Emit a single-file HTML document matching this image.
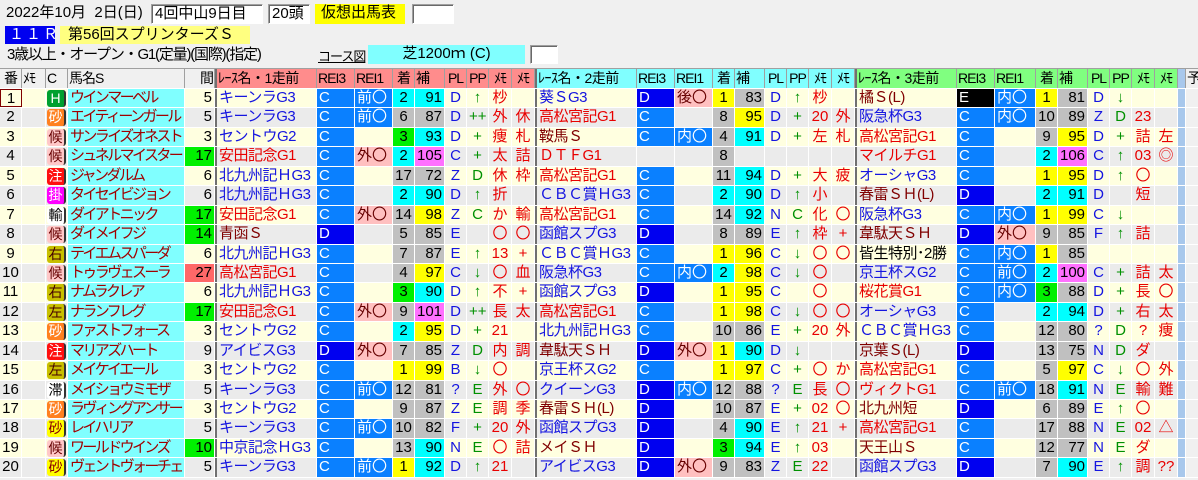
<!DOCTYPE html>
<html><head><meta charset="utf-8"><style>
*{box-sizing:border-box;margin:0;padding:0}
body{width:1198px;height:480px;overflow:hidden;background:#f0f0f0;font-family:"Liberation Sans","Noto Sans CJK JP",sans-serif;font-size:15px;color:#000;position:relative}
.a{position:absolute;white-space:nowrap;line-height:18px}
.bx{background:#fff;border:1px solid #a0a0a0;border-right-color:#fff;border-bottom-color:#fff;box-shadow:inset 1px 1px 0 #696969}
#t{position:absolute;left:0;top:68px;width:1198px;border-top:1px solid #a0a0a0}
.r{display:flex;height:19.45px;border-bottom:1px solid #fff}
.h{height:20px;background:#f0f0f0}
.o{background:#ffffe0}.e{background:#ebebeb}
.r>b{display:block;font-weight:normal;height:100%;border-right:1px solid #fff;overflow:hidden;white-space:nowrap;line-height:18px;padding:0 2px;flex:none}
.h>b{border-right:1px solid #a0a0a0;padding:0 1px;font-size:14px;line-height:19px;letter-spacing:-1px}
.r>b:nth-child(1){width:22px;text-align:center}
.r>b:nth-child(2){width:24px}
.r>b:nth-child(3){width:22px;padding:0 1px}
.r>b:nth-child(4){width:117px}
.r>b:nth-child(5){width:30px;text-align:right}
.r>b:nth-child(6),.r>b:nth-child(15),.r>b:nth-child(24){width:102px;border-left:2px solid #707070;letter-spacing:-0.5px}
.r>b:nth-child(7),.r>b:nth-child(8),.r>b:nth-child(16),.r>b:nth-child(17),.r>b:nth-child(25){width:38px}
.r>b:nth-child(26){width:41px}
.r>b:nth-child(9),.r>b:nth-child(18),.r>b:nth-child(27){width:22px;text-align:center}
.r>b:nth-child(10),.r>b:nth-child(19),.r>b:nth-child(28){width:30px;text-align:right}
.r>b:nth-child(11),.r>b:nth-child(12),.r>b:nth-child(20),.r>b:nth-child(21),.r>b:nth-child(29),.r>b:nth-child(30){width:22px;text-align:center}
.r>b:nth-child(13),.r>b:nth-child(14),.r>b:nth-child(22),.r>b:nth-child(23),.r>b:nth-child(31),.r>b:nth-child(32){width:23px;text-align:center;padding:0}
.r>b:nth-child(33){width:8px;background:#a8c8ec;padding:0}
.r>b:nth-child(34){width:20px;background:#f0f0f0}
.h>b:nth-child(n+6):nth-child(-n+14){background:#ff8c8c}
.h>b:nth-child(n+15):nth-child(-n+23){background:#80ffff}
.h>b:nth-child(n+24):nth-child(-n+32){background:#80ff80}
.r>b.nm{background:#80ffff;color:#a00000;letter-spacing:-2.6px}
.c{background:#0a80ff!important;color:#fff}
.d{background:#0000f0!important;color:#fff}
.k{background:#000!important;color:#fff}
.p{background:#ffc0c0!important;color:#600}
.y{background:#ffff00!important}
.cy{background:#00ffff!important}
.g{background:#00f000!important}
.gr{background:#c0c0c0!important}
.m{background:#ff70ff!important}
.rd{background:#ff6868!important}
.tb{color:#1414e0}.tr{color:#e80000}.tn{color:#800000}.tg{color:#009000}
.sel{border:1px solid #800000!important;background:#ffffe0}
s{text-decoration:none;display:inline-block;width:19px;height:17px;line-height:17px;text-align:center;border-radius:3px;margin-top:1px;font-size:14px;border-right:2px solid #333}
.sH{background:#00a030;color:#fff}.sS{background:#ff8020;color:#fff}.sK{background:#ffc8c8;color:#600}.sC{background:#ff1010;color:#fff}.sM{background:#ff00ff;color:#fff}.sW{background:#fff;color:#000}.sR{background:#c8c000;color:#400}.sY{background:#ffff00;color:#800}
</style></head><body>
<div class="a" style="left:6px;top:4px">2022年10月&nbsp; 2日(日)</div>
<div class="a bx" style="left:151px;top:4px;width:112px;height:20px;padding-left:3px;line-height:17px">4回中山9日目</div>
<div class="a bx" style="left:268px;top:4px;width:42px;height:20px;padding-left:3px;line-height:17px">20頭</div>
<div class="a" style="left:315px;top:4px;width:90px;height:20px;background:#ffff00;padding-left:6px">仮想出馬表</div>
<div class="a bx" style="left:412px;top:4px;width:42px;height:20px"></div>
<div class="a" style="left:5px;top:26px;width:50px;height:18px;background:#0000f0;color:#fff;padding-left:4px;letter-spacing:2px">１１Ｒ</div>
<div class="a" style="left:60px;top:26px;width:190px;height:18px;background:#ffff80;padding-left:8px">第56回スプリンターズＳ</div>
<div class="a" style="left:7px;top:46px;letter-spacing:-1.2px">3歳以上・オープン・G1(定量)(国際)(指定)</div>
<div class="a" style="left:318px;top:48px;font-size:13px;letter-spacing:-1px;text-decoration:underline">コース図</div>
<div class="a" style="left:368px;top:45px;width:157px;height:19px;background:#80ffff;text-align:center">芝1200ｍ (C)</div>
<div class="a bx" style="left:530px;top:45px;width:28px;height:19px"></div>
<div id="t">
<div class="r h"><b>番</b><b>ﾒﾓ</b><b>C</b><b>馬名S</b><b style="text-align:right">間</b><b>ﾚｰｽ名・1走前</b><b>REI3</b><b>REI1</b><b>着</b><b style="text-align:left">補</b><b>PL</b><b>PP</b><b>ﾒﾓ</b><b>ﾒﾓ</b><b>ﾚｰｽ名・2走前</b><b>REI3</b><b>REI1</b><b>着</b><b style="text-align:left">補</b><b>PL</b><b>PP</b><b>ﾒﾓ</b><b>ﾒﾓ</b><b>ﾚｰｽ名・3走前</b><b>REI3</b><b>REI1</b><b>着</b><b style="text-align:left">補</b><b>PL</b><b>PP</b><b>ﾒﾓ</b><b>ﾒﾓ</b><b></b><b>予</b></div>

<div class="r o"><b class=sel>1</b><b></b><b><s class=sH>H</s></b><b class=nm>ウインマーベル</b><b>5</b><b class=tb>キーンラG3</b><b class=c>C</b><b class=c>前〇</b><b class=cy>2</b><b class=cy>91</b><b class=tb>D</b><b class=tg>↑</b><b class=tr>杪</b><b></b><b class=tb>葵ＳG3</b><b class=d>D</b><b class=p>後〇</b><b class=y>1</b><b class=gr>83</b><b class=tb>D</b><b class=tg>↑</b><b class=tr>杪</b><b></b><b class=tn>橘Ｓ(L)</b><b class=k>E</b><b class=c>内〇</b><b class=y>1</b><b class=gr>81</b><b class=tb>D</b><b class=tg>↓</b><b></b><b></b><b></b><b></b></div>
<div class="r e"><b>2</b><b></b><b><s class=sS>砂</s></b><b class=nm>エイティーンガール</b><b>5</b><b class=tb>キーンラG3</b><b class=c>C</b><b class=c>前〇</b><b class=gr>6</b><b class=gr>87</b><b class=tb>D</b><b class=tg>++</b><b class=tr>外</b><b class=tr>休</b><b class=tr>高松宮記G1</b><b class=c>C</b><b></b><b class=gr>8</b><b class=y>95</b><b class=tb>D</b><b class=tg>+</b><b class=tr>20</b><b class=tr>外</b><b class=tb>阪急杯G3</b><b class=c>C</b><b class=c>内〇</b><b class=gr>10</b><b class=gr>89</b><b class=tb>Z</b><b class=tg>D</b><b class=tr>23</b><b></b><b></b><b></b></div>
<div class="r o"><b>3</b><b></b><b><s class=sK>候</s></b><b class=nm>サンライズオネスト</b><b>3</b><b class=tb>セントウG2</b><b class=c>C</b><b></b><b class=g>3</b><b class=cy>93</b><b class=tb>D</b><b class=tg>+</b><b class=tr>痩</b><b class=tr>札</b><b class=tn>鞍馬Ｓ</b><b class=c>C</b><b class=c>内〇</b><b class=gr>4</b><b class=cy>91</b><b class=tb>D</b><b class=tg>+</b><b class=tr>左</b><b class=tr>札</b><b class=tr>高松宮記G1</b><b class=c>C</b><b></b><b class=gr>9</b><b class=y>95</b><b class=tb>D</b><b class=tg>+</b><b class=tr>詰</b><b class=tr>左</b><b></b><b></b></div>
<div class="r e"><b>4</b><b></b><b><s class=sK>候</s></b><b class=nm>シュネルマイスター</b><b class=g>17</b><b class=tr>安田記念G1</b><b class=c>C</b><b class=p>外〇</b><b class=cy>2</b><b class=m>105</b><b class=tb>C</b><b class=tg>+</b><b class=tr>太</b><b class=tr>詰</b><b class=tr>ＤＴＦG1</b><b></b><b></b><b class=gr>8</b><b></b><b></b><b></b><b></b><b></b><b class=tr>マイルチG1</b><b class=c>C</b><b></b><b class=cy>2</b><b class=m>106</b><b class=tb>C</b><b class=tg>↑</b><b class=tr>03</b><b class=tr>◎</b><b></b><b></b></div>
<div class="r o"><b>5</b><b></b><b><s class=sC>注</s></b><b class=nm>ジャンダルム</b><b>6</b><b class=tb>北九州記ＨG3</b><b class=c>C</b><b></b><b class=gr>17</b><b class=gr>72</b><b class=tb>Z</b><b class=tg>D</b><b class=tr>休</b><b class=tr>枠</b><b class=tr>高松宮記G1</b><b class=c>C</b><b></b><b class=gr>11</b><b class=cy>94</b><b class=tb>D</b><b class=tg>+</b><b class=tr>大</b><b class=tr>疲</b><b class=tb>オーシャG3</b><b class=c>C</b><b></b><b class=y>1</b><b class=y>95</b><b class=tb>D</b><b class=tg>↑</b><b class=tr>〇</b><b></b><b></b><b></b></div>
<div class="r e"><b>6</b><b></b><b><s class=sM>掛</s></b><b class=nm>タイセイビジョン</b><b>6</b><b class=tb>北九州記ＨG3</b><b class=c>C</b><b></b><b class=cy>2</b><b class=cy>90</b><b class=tb>D</b><b class=tg>↑</b><b class=tr>折</b><b></b><b class=tb>ＣＢＣ賞ＨG3</b><b class=c>C</b><b></b><b class=cy>2</b><b class=cy>90</b><b class=tb>D</b><b class=tg>↑</b><b class=tr>小</b><b></b><b class=tn>春雷ＳＨ(L)</b><b class=d>D</b><b></b><b class=cy>2</b><b class=cy>91</b><b class=tb>D</b><b></b><b class=tr>短</b><b></b><b></b><b></b></div>
<div class="r o"><b>7</b><b></b><b><s class=sW>輸</s></b><b class=nm>ダイアトニック</b><b class=g>17</b><b class=tr>安田記念G1</b><b class=c>C</b><b class=p>外〇</b><b class=gr>14</b><b class=y>98</b><b class=tb>Z</b><b class=tg>C</b><b class=tr>か</b><b class=tr>輸</b><b class=tr>高松宮記G1</b><b class=c>C</b><b></b><b class=gr>14</b><b class=cy>92</b><b class=tb>N</b><b class=tg>C</b><b class=tr>化</b><b class=tr>〇</b><b class=tb>阪急杯G3</b><b class=c>C</b><b class=c>内〇</b><b class=y>1</b><b class=y>99</b><b class=tb>C</b><b class=tg>↓</b><b></b><b></b><b></b><b></b></div>
<div class="r e"><b>8</b><b></b><b><s class=sK>候</s></b><b class=nm>ダイメイフジ</b><b class=g>14</b><b class=tn>青函Ｓ</b><b class=d>D</b><b></b><b class=gr>5</b><b class=gr>85</b><b class=tb>E</b><b></b><b class=tr>〇</b><b class=tr>〇</b><b class=tb>函館スプG3</b><b class=d>D</b><b></b><b class=gr>8</b><b class=gr>89</b><b class=tb>E</b><b class=tg>↑</b><b class=tr>枠</b><b class=tr>+</b><b class=tn>韋駄天ＳＨ</b><b class=d>D</b><b class=p>外〇</b><b class=gr>9</b><b class=gr>85</b><b class=tb>F</b><b class=tg>↑</b><b class=tr>詰</b><b></b><b></b><b></b></div>
<div class="r o"><b>9</b><b></b><b><s class=sR>右</s></b><b class=nm>テイエムスパーダ</b><b>6</b><b class=tb>北九州記ＨG3</b><b class=c>C</b><b></b><b class=gr>7</b><b class=gr>87</b><b class=tb>E</b><b class=tg>↑</b><b class=tr>13</b><b class=tr>+</b><b class=tb>ＣＢＣ賞ＨG3</b><b class=c>C</b><b></b><b class=y>1</b><b class=y>96</b><b class=tb>C</b><b class=tg>↓</b><b class=tr>〇</b><b class=tr>〇</b><b>皆生特別･2勝</b><b class=c>C</b><b class=c>内〇</b><b class=y>1</b><b class=gr>85</b><b></b><b></b><b></b><b></b><b></b><b></b></div>
<div class="r e"><b>10</b><b></b><b><s class=sK>候</s></b><b class=nm>トゥラヴェスーラ</b><b class=rd>27</b><b class=tr>高松宮記G1</b><b class=c>C</b><b></b><b class=gr>4</b><b class=y>97</b><b class=tb>C</b><b class=tg>↓</b><b class=tr>〇</b><b class=tr>血</b><b class=tb>阪急杯G3</b><b class=c>C</b><b class=c>内〇</b><b class=cy>2</b><b class=y>98</b><b class=tb>C</b><b class=tg>↓</b><b class=tr>〇</b><b></b><b class=tb>京王杯スG2</b><b class=c>C</b><b class=c>前〇</b><b class=cy>2</b><b class=m>100</b><b class=tb>C</b><b class=tg>+</b><b class=tr>詰</b><b class=tr>太</b><b></b><b></b></div>
<div class="r o"><b>11</b><b></b><b><s class=sR>右</s></b><b class=nm>ナムラクレア</b><b>6</b><b class=tb>北九州記ＨG3</b><b class=c>C</b><b></b><b class=g>3</b><b class=cy>90</b><b class=tb>D</b><b class=tg>↑</b><b class=tr>不</b><b class=tr>+</b><b class=tb>函館スプG3</b><b class=d>D</b><b></b><b class=y>1</b><b class=y>95</b><b class=tb>C</b><b></b><b class=tr>〇</b><b></b><b class=tr>桜花賞G1</b><b class=c>C</b><b class=c>内〇</b><b class=g>3</b><b class=gr>88</b><b class=tb>D</b><b class=tg>+</b><b class=tr>長</b><b class=tr>〇</b><b></b><b></b></div>
<div class="r e"><b>12</b><b></b><b><s class=sR>左</s></b><b class=nm>ナランフレグ</b><b class=g>17</b><b class=tr>安田記念G1</b><b class=c>C</b><b class=p>外〇</b><b class=gr>9</b><b class=m>101</b><b class=tb>D</b><b class=tg>++</b><b class=tr>長</b><b class=tr>太</b><b class=tr>高松宮記G1</b><b class=c>C</b><b></b><b class=y>1</b><b class=y>98</b><b class=tb>C</b><b class=tg>↓</b><b class=tr>〇</b><b class=tr>〇</b><b class=tb>オーシャG3</b><b class=c>C</b><b></b><b class=cy>2</b><b class=cy>94</b><b class=tb>D</b><b class=tg>+</b><b class=tr>右</b><b class=tr>太</b><b></b><b></b></div>
<div class="r o"><b>13</b><b></b><b><s class=sS>砂</s></b><b class=nm>ファストフォース</b><b>3</b><b class=tb>セントウG2</b><b class=c>C</b><b></b><b class=cy>2</b><b class=y>95</b><b class=tb>D</b><b class=tg>+</b><b class=tr>21</b><b></b><b class=tb>北九州記ＨG3</b><b class=c>C</b><b></b><b class=gr>10</b><b class=gr>86</b><b class=tb>E</b><b class=tg>+</b><b class=tr>20</b><b class=tr>外</b><b class=tb>ＣＢＣ賞ＨG3</b><b class=c>C</b><b></b><b class=gr>12</b><b class=gr>80</b><b class=tb>?</b><b class=tg>D</b><b class=tr>?</b><b class=tr>痩</b><b></b><b></b></div>
<div class="r e"><b>14</b><b></b><b><s class=sC>注</s></b><b class=nm>マリアズハート</b><b>9</b><b class=tb>アイビスG3</b><b class=d>D</b><b class=p>外〇</b><b class=gr>7</b><b class=gr>85</b><b class=tb>Z</b><b class=tg>D</b><b class=tr>内</b><b class=tr>調</b><b class=tn>韋駄天ＳＨ</b><b class=d>D</b><b class=p>外〇</b><b class=y>1</b><b class=cy>90</b><b class=tb>D</b><b class=tg>↓</b><b></b><b></b><b class=tn>京葉Ｓ(L)</b><b class=d>D</b><b></b><b class=gr>13</b><b class=gr>75</b><b class=tb>N</b><b class=tg>D</b><b class=tr>ダ</b><b></b><b></b><b></b></div>
<div class="r o"><b>15</b><b></b><b><s class=sR>左</s></b><b class=nm>メイケイエール</b><b>3</b><b class=tb>セントウG2</b><b class=c>C</b><b></b><b class=y>1</b><b class=y>99</b><b class=tb>B</b><b class=tg>↓</b><b class=tr>〇</b><b></b><b class=tb>京王杯スG2</b><b class=c>C</b><b></b><b class=y>1</b><b class=y>97</b><b class=tb>C</b><b class=tg>+</b><b class=tr>〇</b><b class=tr>か</b><b class=tr>高松宮記G1</b><b class=c>C</b><b></b><b class=gr>5</b><b class=y>97</b><b class=tb>C</b><b class=tg>↓</b><b class=tr>〇</b><b class=tr>外</b><b></b><b></b></div>
<div class="r e"><b>16</b><b></b><b><s class=sW>滞</s></b><b class=nm>メイショウミモザ</b><b>5</b><b class=tb>キーンラG3</b><b class=c>C</b><b class=c>前〇</b><b class=gr>12</b><b class=gr>81</b><b class=tb>?</b><b class=tg>E</b><b class=tr>外</b><b class=tr>〇</b><b class=tb>クイーンG3</b><b class=d>D</b><b class=c>内〇</b><b class=gr>12</b><b class=gr>88</b><b class=tb>?</b><b class=tg>E</b><b class=tr>長</b><b class=tr>〇</b><b class=tr>ヴィクトG1</b><b class=c>C</b><b class=c>前〇</b><b class=gr>18</b><b class=cy>91</b><b class=tb>N</b><b class=tg>E</b><b class=tr>輸</b><b class=tr>難</b><b></b><b></b></div>
<div class="r o"><b>17</b><b></b><b><s class=sS>砂</s></b><b class=nm>ラヴィングアンサー</b><b>3</b><b class=tb>セントウG2</b><b class=c>C</b><b></b><b class=gr>9</b><b class=gr>87</b><b class=tb>Z</b><b class=tg>E</b><b class=tr>調</b><b class=tr>季</b><b class=tn>春雷ＳＨ(L)</b><b class=d>D</b><b></b><b class=gr>10</b><b class=gr>87</b><b class=tb>E</b><b class=tg>+</b><b class=tr>02</b><b class=tr>〇</b><b class=tn>北九州短</b><b class=d>D</b><b></b><b class=gr>6</b><b class=gr>89</b><b class=tb>E</b><b class=tg>↑</b><b class=tr>〇</b><b></b><b></b><b></b></div>
<div class="r e"><b>18</b><b></b><b><s class=sY>砂</s></b><b class=nm>レイハリア</b><b>5</b><b class=tb>キーンラG3</b><b class=c>C</b><b class=c>前〇</b><b class=gr>10</b><b class=gr>82</b><b class=tb>F</b><b class=tg>+</b><b class=tr>20</b><b class=tr>外</b><b class=tb>函館スプG3</b><b class=d>D</b><b></b><b class=gr>4</b><b class=cy>90</b><b class=tb>E</b><b class=tg>↑</b><b class=tr>21</b><b class=tr>+</b><b class=tr>高松宮記G1</b><b class=c>C</b><b></b><b class=gr>17</b><b class=gr>88</b><b class=tb>N</b><b class=tg>E</b><b class=tr>02</b><b class=tr>△</b><b></b><b></b></div>
<div class="r o"><b>19</b><b></b><b><s class=sK>候</s></b><b class=nm>ワールドウインズ</b><b class=g>10</b><b class=tb>中京記念ＨG3</b><b class=c>C</b><b></b><b class=gr>13</b><b class=cy>90</b><b class=tb>N</b><b class=tg>E</b><b class=tr>〇</b><b class=tr>詰</b><b class=tn>メイＳＨ</b><b class=d>D</b><b></b><b class=g>3</b><b class=cy>94</b><b class=tb>E</b><b class=tg>↑</b><b class=tr>03</b><b></b><b class=tn>天王山Ｓ</b><b class=c>C</b><b></b><b class=gr>12</b><b class=gr>77</b><b class=tb>N</b><b class=tg>E</b><b class=tr>ダ</b><b></b><b></b><b></b></div>
<div class="r e"><b>20</b><b></b><b><s class=sY>砂</s></b><b class=nm>ヴェントヴォーチェ</b><b>5</b><b class=tb>キーンラG3</b><b class=c>C</b><b class=c>前〇</b><b class=y>1</b><b class=cy>92</b><b class=tb>D</b><b class=tg>↑</b><b class=tr>21</b><b></b><b class=tb>アイビスG3</b><b class=d>D</b><b class=p>外〇</b><b class=gr>9</b><b class=gr>83</b><b class=tb>Z</b><b class=tg>E</b><b class=tr>22</b><b></b><b class=tb>函館スプG3</b><b class=d>D</b><b></b><b class=gr>7</b><b class=cy>90</b><b class=tb>E</b><b class=tg>↑</b><b class=tr>調</b><b class=tr>??</b><b></b><b></b></div>
</div>
</body></html>
